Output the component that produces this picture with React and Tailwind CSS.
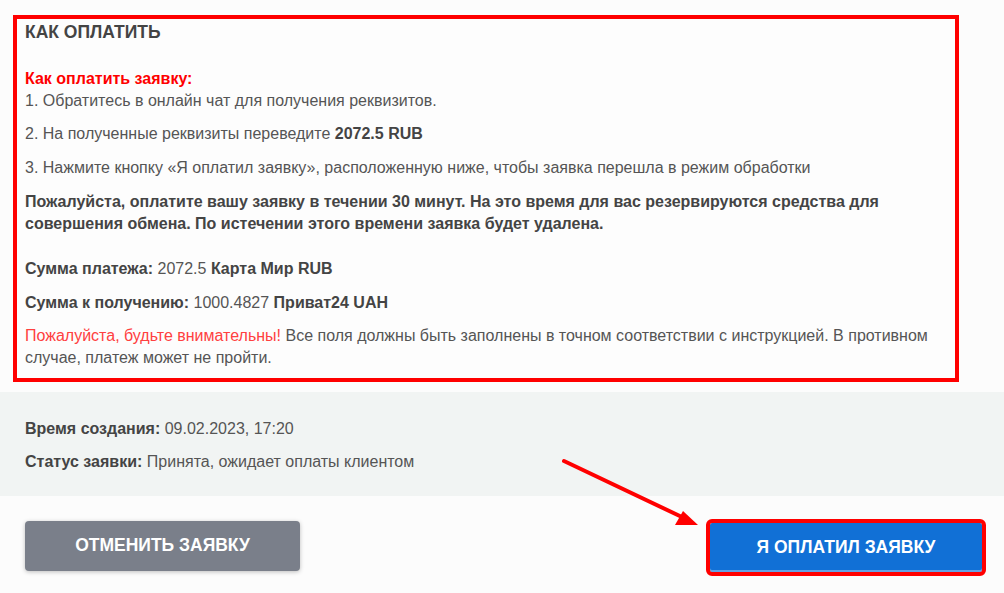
const Arrow = () => (
  <svg
    className="pointer-events-none absolute left-0 top-0"
    width="1004"
    height="593"
    viewBox="0 0 1004 593"
  >
    <line x1="564" y1="461" x2="684" y2="518" stroke="#ff0000" strokeWidth="4" strokeLinecap="round" />
    <polygon points="698,525 683,511 675,525" fill="#ff0000" />
  </svg>
);

const App = () => {
  return (
    <div className="relative min-h-[593px] bg-[#fcfcfc] pt-[15px] font-['Liberation_Sans',Arial,sans-serif] text-[16px] leading-[21.5px] text-[#555]">
      <div className="ml-[13px] w-[946px] border-4 border-[#ff0000] bg-[#fdfdfd] px-2 pt-[3px] pb-[10px]">
        <h2 className="text-[17.5px] font-bold leading-[21px] text-[#444]">КАК ОПЛАТИТЬ</h2>

        <p className="mt-[25px]">
          <span className="font-bold text-[#ff0000]">Как оплатить заявку:</span>
          <br />
          1. Обратитесь в онлайн чат для получения реквизитов.
        </p>
        <p className="mt-[12px]">
          2. На полученные реквизиты переведите <b className="text-[#444]">2072.5 RUB</b>
        </p>
        <p className="mt-[12px]">
          3. Нажмите кнопку «Я оплатил заявку», расположенную ниже, чтобы заявка перешла в режим обработки
        </p>
        <p className="mt-[13px] font-bold text-[#444]">
          Пожалуйста, оплатите вашу заявку в течении 30 минут. На это время для вас резервируются средства для
          совершения обмена. По истечении этого времени заявка будет удалена.
        </p>

        <p className="mt-[24px]">
          <b className="text-[#444]">Сумма платежа:</b> 2072.5 <b className="text-[#444]">Карта Мир RUB</b>
        </p>
        <p className="mt-[12px]">
          <b className="text-[#444]">Сумма к получению:</b> 1000.4827 <b className="text-[#444]">Приват24 UAH</b>
        </p>
        <p className="mt-[12px]">
          <span className="text-[#ff4040]">Пожалуйста, будьте внимательны!</span> Все поля должны быть заполнены в
          точном соответствии с инструкцией. В противном случае, платеж может не пройти.
        </p>
      </div>

      <div className="mt-[10px] h-[104px] bg-[#f1f4f3] px-[25px] pt-[26px]">
        <p>
          <b className="text-[#444]">Время создания:</b> 09.02.2023, 17:20
        </p>
        <p className="mt-[11px]">
          <b className="text-[#444]">Статус заявки:</b> Принята, ожидает оплаты клиентом
        </p>
      </div>

      <div className="flex items-start justify-between pl-[25px] pr-[22px] pt-[25px]">
        <button className="h-[50px] w-[275px] rounded-[4px] bg-[#7a7f8a] text-[17.5px] font-bold uppercase text-white shadow-[0_1px_4px_rgba(0,0,0,0.25)]">
          Отменить заявку
        </button>
        <button className="mt-[2px] h-[49px] w-[272px] rounded-[2px] bg-[#1170d6] text-[17.5px] font-bold uppercase text-white outline-4 outline-[#ff0000] shadow-[inset_0_-2px_0_rgba(255,255,255,0.35)]">
          Я оплатил заявку
        </button>
      </div>

      <Arrow />
    </div>
  );
};

export default App;
